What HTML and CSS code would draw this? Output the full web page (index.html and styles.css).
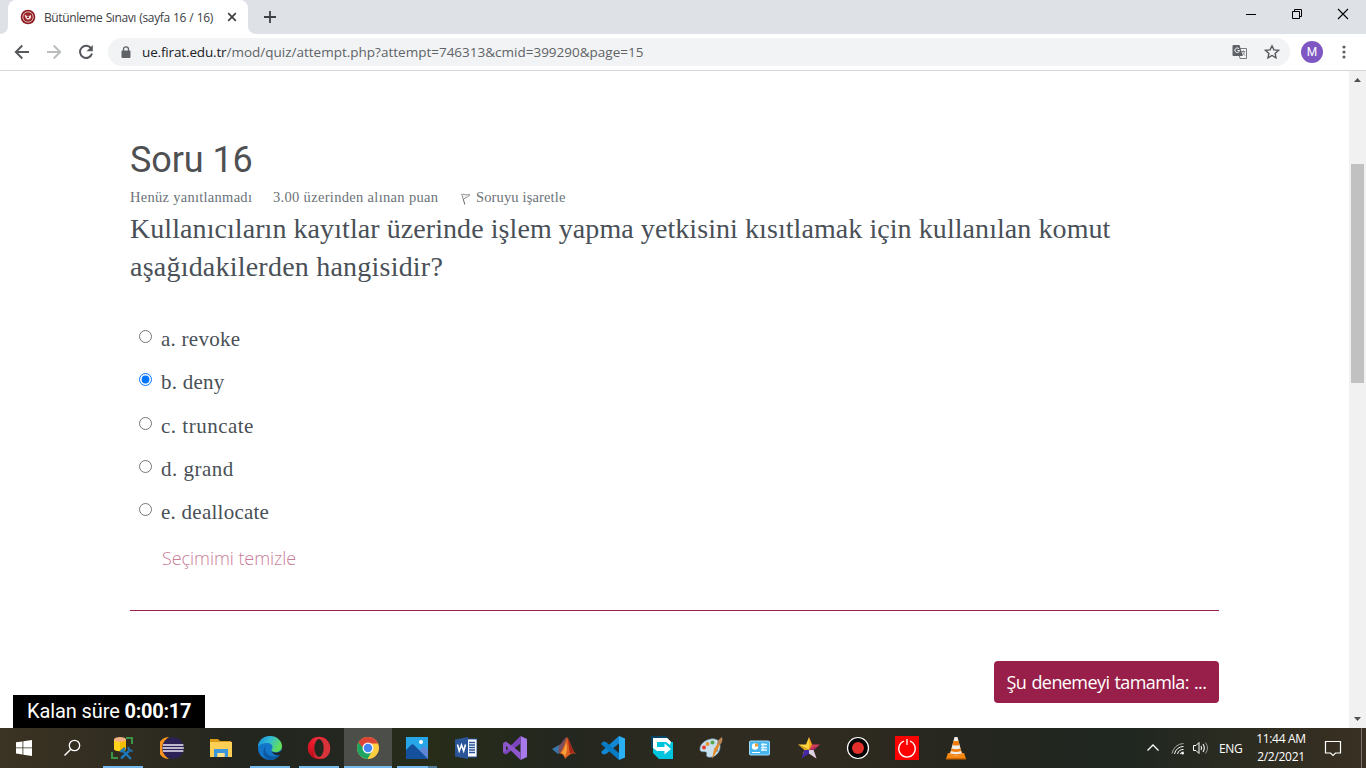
FILE: index.html
```html
<!DOCTYPE html>
<html lang="tr">
<head>
<meta charset="utf-8">
<title>Bütünleme Sınavı (sayfa 16 / 16)</title>
<link rel="stylesheet" href="styles.css">
</head>
<body>
<div class="desktop">
  <header class="tabstrip">
    <div class="tab">
      <svg class="favicon" width="16" height="16" viewBox="0 0 16 16"><circle cx="8" cy="8" r="7.3" fill="#8f1d22"/><circle cx="8" cy="8" r="5.2" fill="none" stroke="#e0bcbc" stroke-width="1"/><circle cx="8" cy="8" r="3.800" fill="#a02a2e"/><path d="M4.500 5.500l2.500 1.500h2l2-1v3L9 10.500H7L5.500 8.500z" fill="#f3e2e2"/><rect x="7" y="7.500" width="2" height="1.500" fill="#8f1d22"/></svg>
      <span class="tab-title">Bütünleme Sınavı (sayfa 16 / 16)</span>
      <svg class="tab-close" width="10" height="10" viewBox="0 0 10 10"><path d="M1.200 1.200l7.600 7.600M8.800 1.200L1.200 8.800" stroke="#3c4043" stroke-width="1.700"/></svg>
    </div>
    <svg class="new-tab" width="12" height="12" viewBox="0 0 12 12"><path d="M6 0v12M0 6h12" stroke="#3c4043" stroke-width="1.800"/></svg>
    <div class="window-controls">
      <svg width="46" height="28" viewBox="0 0 46 28"><path d="M18 14.500h10" stroke="#000"/></svg>
      <svg width="46" height="28" viewBox="0 0 46 28"><path d="M18.500 11.500h7v7h-7zM20.500 11.500v-2h7v7h-2" fill="none" stroke="#000"/></svg>
      <svg width="46" height="28" viewBox="0 0 46 28"><path d="M18 9l10 10M28 9L18 19" stroke="#000" stroke-width="1.100"/></svg>
    </div>
  </header>
  <nav class="toolbar">
    <svg class="nav-icon" width="16" height="16" viewBox="0 0 16 16"><path d="M15 8H2M8.300 1.500L1.800 8l6.500 6.500" fill="none" stroke="#55585c" stroke-width="1.900"/></svg>
    <svg class="nav-icon" width="16" height="16" viewBox="0 0 16 16"><path d="M1 8h13M7.700 1.500L14.200 8l-6.500 6.500" fill="none" stroke="#babcbe" stroke-width="1.900"/></svg>
    <svg class="nav-icon" width="16" height="16" viewBox="0 0 16 16"><path d="M13.300 4.600A6.100 6.100 0 1 0 14 9.500" fill="none" stroke="#55585c" stroke-width="2"/><path d="M14.800 1v6.200H8.600z" fill="#55585c"/></svg>
    <div class="omnibox">
      <svg width="10" height="13" viewBox="0 0 10 13"><path d="M2.500 5V3.300a2.500 2.500 0 0 1 5 0V5" fill="none" stroke="#5f6368" stroke-width="1.300"/><rect x="0.500" y="4.500" width="9" height="7.500" rx="1" fill="#5f6368"/></svg>
      <span class="url"><b>ue.firat.edu.tr</b>/mod/quiz/attempt.php?attempt=746313&amp;cmid=399290&amp;page=15</span>
      <svg class="translate" width="16" height="16" viewBox="0 0 16 16"><path d="M6 4.500h8.500v10H8z" fill="#f7f7f8" stroke="#777a7e" stroke-width="1"/><path d="M1.500 1h6l3.300 11H1.500A1 1 0 0 1 .5 11V2a1 1 0 0 1 1-1z" fill="#5f6368"/><path d="M7 4.800A2.300 2.300 0 1 0 7.500 6.500H5.500" fill="none" stroke="#fff" stroke-width="1"/><path d="M9.200 7.500h4M11.300 6.300v1.200M12.500 7.500c-.3 2-1.500 3-2.300 3.500M10.500 8.500l2.600 3.200" fill="none" stroke="#777a7e" stroke-width=".9"/></svg>
      <svg class="star" width="16" height="16" viewBox="0 0 16 16"><path d="M8 1.800l1.900 4.100 4.500.5-3.300 3 .9 4.400L8 11.500l-4 2.300.9-4.400-3.300-3 4.500-.5z" fill="none" stroke="#55585c" stroke-width="1.400"/></svg>
    </div>
    <div class="avatar">M</div>
    <svg class="more" width="4" height="14" viewBox="0 0 4 14"><g fill="#5f6368"><circle cx="2" cy="2" r="1.600"/><circle cx="2" cy="7" r="1.600"/><circle cx="2" cy="12" r="1.600"/></g></svg>
  </nav>
  <div class="viewport">
    <main class="page">
      <h1 class="question-title">Soru 16</h1>
      <div class="meta">
        <span class="state">Henüz yanıtlanmadı</span>
        <span class="grade">3.00 üzerinden alınan puan</span>
        <svg class="flag-icon" width="10" height="12" viewBox="0 0 10 12"><path d="M.8 1l3 10.500" stroke="#666" stroke-width="1"/><path d="M1 1.500c2-1 3 .8 5 .2l3 .1-3 2.500-3.500 1.700" fill="#eee" stroke="#888" stroke-width=".9"/></svg>
        <span class="flag">Soruyu işaretle</span>
      </div>
      <p class="question"><span class="line-one">Kullanıcıların kayıtlar üzerinde işlem yapma yetkisini kısıtlamak için kullanılan komut</span><br><span class="line-two">aşağıdakilerden hangisidir?</span></p>
      <div class="answers">
        <label class="answer"><input type="radio" name="answer"><span>a. revoke</span></label>
        <label class="answer"><input type="radio" name="answer" checked><span>b. deny</span></label>
        <label class="answer"><input type="radio" name="answer"><span class="wide">c. truncate</span></label>
        <label class="answer"><input type="radio" name="answer"><span class="wide">d. grand</span></label>
        <label class="answer"><input type="radio" name="answer"><span>e. deallocate</span></label>
      </div>
      <a class="clear">Seçimimi temizle</a>
      <div class="actions"><button class="finish">Şu denemeyi tamamla: ...</button></div>
    </main>
    <div class="scrollbar">
      <svg width="17" height="17" viewBox="0 0 17 17"><path d="M5 11l3.500-4L12 11z" fill="#505050"/></svg>
      <div class="thumb"></div>
      <svg class="down" width="17" height="17" viewBox="0 0 17 17"><path d="M5 6h7l-3.500 4z" fill="#505050"/></svg>
    </div>
    <div class="timer">Kalan süre <b>0:00:17</b></div>
  </div>
  <footer class="taskbar">
    <div class="cell"><svg width="16" height="16" viewBox="0 0 16 16"><path d="M0 2.300L6.500 1.400V7.500H0zM7.300 1.300L16 0v7.500H7.300zM0 8.300h6.500v6.200L0 13.600zM7.300 8.300H16V16l-8.700-1.300z" fill="#fff"/></svg></div>
    <div class="cell search"><svg width="18" height="18" viewBox="0 0 18 18"><circle cx="11.500" cy="6.500" r="5.200" fill="none" stroke="#fff" stroke-width="1.300"/><path d="M7.800 10.300L1.500 16.500" stroke="#fff" stroke-width="1.400"/></svg></div>
    <div class="cell open first"><svg width="24" height="24" viewBox="0 0 24 24"><path d="M16 2h6v6M2 16v6h6" fill="none" stroke="#3a9445" stroke-width="2"/><path d="M4 3v10c0 3 12 3 12 0V3z" fill="#ffd21c"/><path d="M10 3h6v10c0 1.500-3 2.200-6 2.200z" fill="#f5bd00"/><ellipse cx="10" cy="3.500" rx="6" ry="2.400" fill="#f2b183"/><g stroke="#1f77b8" stroke-width="2.400" fill="none"><path d="M12 14l9 9M10.500 16l4.500-4"/><path d="M11 22.500L19 15"/><path d="M22.500 14.500a3 3 0 0 1-4-3.500" stroke-width="2"/></g></svg></div>
    <div class="cell"><svg width="24" height="24" viewBox="0 0 24 24"><path d="M9 1A11 11 0 0 0 9 23 13 13 0 0 1 9 1z" fill="#f7941e"/><circle cx="13" cy="12" r="10.800" fill="#2c2255"/><path d="M3 9h20.400M2.500 12h21.300M3 15h20.400" stroke="#eeeaf8" stroke-width="1.300"/></svg></div>
    <div class="cell"><svg width="22" height="22" viewBox="0 0 22 22"><path d="M0 2h8l2 2h11v5H0z" fill="#d99a15"/><path d="M0 5h22v15H0z" fill="#ffcf55"/><path d="M4 12h14v8h-3.500v-4h-7v4H4z" fill="#3b97db"/><path d="M7.500 16h7v4h-7z" fill="#ffdf8c"/></svg></div>
    <div class="cell open"><svg width="24" height="24" viewBox="0 0 24 24"><defs><linearGradient id="edge-top" x1="0" y1="0" x2="1" y2=".4"><stop offset="0" stop-color="#1686d9"/><stop offset=".5" stop-color="#31bbd3"/><stop offset="1" stop-color="#63de59"/></linearGradient></defs><circle cx="12" cy="12" r="12" fill="#1376c8"/><path d="M0 11C0 4.500 5.500 0 12 0c7 0 12 5 12 10 0 4-3 6-6.500 6-3 0-4-1-4-2 0-.8 1-1.500 1-3 0-2-2-4-5.500-4C4 7 .5 9.500 0 11z" fill="url(#edge-top)"/><path d="M8.500 9C5 12 8 20 15 20.500c3 .2 5.500-.8 7-2-2 3.500-5.500 5.500-9.500 5.500C7 23.500 5 19 5.500 15c.3-3 1.500-5 3-6z" fill="#0c59a4"/><path d="M13.500 14c-.4 2 3 3 6 2.500 2-.3 3.500-1.500 4.500-3l.5 3.500-1.600 2c-3 1-8.900 0-9.400-5z" fill="#22282a"/></svg></div>
    <div class="cell open"><svg width="24" height="24" viewBox="0 0 24 24"><defs><linearGradient id="opera" x1="0" y1="0" x2="0" y2="1"><stop offset="0" stop-color="#ff1f32"/><stop offset="1" stop-color="#b50d18"/></linearGradient></defs><circle cx="12" cy="12" r="11.200" fill="url(#opera)"/><path d="M7.500 3c4-3.500 13-1 15 6 2 6-1 12-6 13.500-4 .5-8-.5-9-1.500z" fill="#d9333b"/><ellipse cx="12" cy="12" rx="4.700" ry="9" fill="#24271f"/></svg></div>
    <div class="cell open active"><svg width="24" height="24" viewBox="0 0 24 24"><circle cx="12" cy="12" r="11" fill="#ffcd40"/><path d="M2.500 6.500A11 11 0 0 1 22 7.500H12L7.500 14z" fill="#db4437"/><path d="M2.500 6.500A11 11 0 0 0 11.500 23l5-8.500-8-1z" fill="#1da462"/><circle cx="12" cy="12" r="5.500" fill="#f5f5f5"/><circle cx="12" cy="12" r="4.200" fill="#4285f4"/></svg></div>
    <div class="cell open stacked"><svg width="22" height="22" viewBox="0 0 22 22"><path d="M0 0h22v22H0z" fill="#27a7e8"/><path d="M12 14l6-5 4 4v9h-6z" fill="#5f86d4"/><path d="M0 13l5-5q1.500-1.500 3 0l14 14H0z" fill="#14509b"/><circle cx="15" cy="5" r="2" fill="#fff"/></svg></div>
    <div class="cell"><svg width="22" height="22" viewBox="0 0 22 22"><path d="M11 2h11v18H11z" fill="#fff" stroke="#2a5699"/><path d="M14 5.500h6M14 8h6M14 10.500h6M14 13h6M14 15.500h6" stroke="#2a5699" stroke-width="1.300"/><path d="M0 2.500L13 0v22L0 19.500z" fill="#2a5699"/><path d="M2.500 7.500l1.700 6.500 2.300-6L8.700 14l1.800-6.500" fill="none" stroke="#fff" stroke-width="1.600"/></svg></div>
    <div class="cell"><svg width="24" height="24" viewBox="0 0 24 24"><path d="M17.500 0L24 3v18l-6.500 3z" fill="#a879e8"/><path d="M17.500 0v7.500L3 18.500 0 17 13 4.500z" fill="#7d45bd"/><path d="M0 7l3-1.500 14.500 11V24L13 19.500z" fill="#8d57cc"/><path d="M0 7l3 2v6l-3 2z" fill="#8d57cc"/></svg></div>
    <div class="cell"><svg width="24" height="24" viewBox="0 0 24 24"><path d="M0 13l7-4 4 4-5 5z" fill="#3978ac"/><path d="M7 9c3-1 5-7 8-8l-4 13-3 3-2-1z" fill="#7a4f5e"/><path d="M15 1c3 3 5 14 9 17-4-2-7 1-11 5-1-4-3-6-6-5 4-3 6-12 8-17z" fill="#df5f22"/><path d="M15 1c3 3 5 14 9 17-3-2-5-1-6 0-1-5-1-12-3-17z" fill="#a3281a"/><path d="M14 6c2 5 1 10-1 15-1-3-2-4-4-4 3-3 4-7 5-11z" fill="#f4a038"/></svg></div>
    <div class="cell"><svg width="24" height="24" viewBox="0 0 24 24"><path d="M18 0l6 2.500v19L18 24z" fill="#2bb0f4"/><path d="M18 0L0 16l2 2.500L5 18 18 7.500z" fill="#1389d5"/><path d="M0 8l2-2.500L5 6l13 11v7z" fill="#087bc4"/></svg></div>
    <div class="cell"><svg width="24" height="24" viewBox="0 0 24 24"><path d="M1 0h15l3 3-5 11H4l-3-3z" fill="#064365"/><path d="M3 2h14l5 5v8H3z" fill="#fff"/><path d="M3 11v6l6 6h14V6h-2l-1 3-4-3H7v8z" fill="#00c4dd"/><path d="M3 2h14l4 4H7v9l-4-3z" fill="#fff"/><path d="M7 11h7.500V7.500l6.500 5.500-6.500 5.500V15H7z" fill="#fff"/></svg></div>
    <div class="cell"><svg width="24" height="24" viewBox="0 0 24 24"><path d="M12 3c6-1 10 3 9 9s-6 10-12 9c-3-1 0-4-2-5s-6 1-6-3C1 8 6 4 12 3z" fill="#c9e1ef" stroke="#789fb8" stroke-width=".7"/><circle cx="5" cy="11.500" r="2" fill="#e93a2e"/><circle cx="8.500" cy="8" r="2" fill="#e59632"/><circle cx="13.500" cy="6.500" r="2" fill="#5aa64a"/><circle cx="17" cy="14" r="2" fill="#3b8ad3"/><path d="M13 23l2-10 4-6 2 1-3 7z" fill="#e68b2c"/><path d="M18 8c0-3 2-5 5-7 1 3 0 7-3 8z" fill="#b98455"/></svg></div>
    <div class="cell"><svg width="22" height="22" viewBox="0 0 22 22"><rect x=".5" y="4" width="20" height="14" rx="1" fill="#48b6ee" stroke="#9adbfa"/><circle cx="6" cy="9.500" r="3.200" fill="#fff"/><path d="M6 9.500V6.300a3.200 3.200 0 0 1 3.200 3.200z" fill="#f29b25"/><path d="M12 7.500h6M12 10.500h6M12 13h6M14 6v8" stroke="#e4f7ff" stroke-width="1.300"/><path d="M3 15.500h8" stroke="#fff"/></svg></div>
    <div class="cell"><svg width="24" height="24" viewBox="0 0 24 24"><path d="M12 1l3 7.500h8L16.500 14l3 8.500L12 17.500z" fill="#d83f56"/><path d="M12 1L9 8.500H1L12 14z" fill="#ffd33b"/><path d="M12 1l3 7.500-3 5.500z" fill="#f1ae18"/><path d="M1 8.500L7.500 14l-2 4.500L12 14z" fill="#f1ae18"/><path d="M7.500 14l-3 8.500 7.500-5V14z" fill="#4328a7"/><path d="M12 14v3.500l7.500 5-3-8.500z" fill="#d7d4e3"/><path d="M12 14l11-5.500-6.500 5.500z" fill="#a22a64"/></svg></div>
    <div class="cell"><svg width="24" height="24" viewBox="0 0 24 24"><circle cx="12" cy="12" r="10.500" fill="#050505" stroke="#fff" stroke-width="1.200"/><circle cx="12" cy="12" r="6" fill="#e12f2b"/></svg></div>
    <div class="cell"><svg width="24" height="24" viewBox="0 0 24 24"><path d="M0 0h24v24H0z" fill="#f00"/><path d="M9 5a8.300 8.300 0 1 0 6 0M12 3v6" fill="none" stroke="#fff" stroke-width="1.300"/></svg></div>
    <div class="cell"><svg width="24" height="24" viewBox="0 0 24 24"><path d="M4 17h16l2 6H2z" fill="#f58a13"/><path d="M10.500 1h3L18 18q-6 3-12 0z" fill="#f1eee8"/><path d="M9.500 5h5l1 4q-3.500 1-7 0zM7.500 12.500q4.500 1.500 9 0L18 18q-6 3-12 0z" fill="#ee7d0c"/><path d="M7 15q5 2 10 0l.6 2.200q-5.600 2.300-11.200 0z" fill="#f1eee8"/><path d="M2 22h20v1.500H2z" fill="#cc6500"/></svg></div>
    <div class="tray">
      <svg width="14" height="14" viewBox="0 0 14 14"><path d="M1.500 9.500L7 4l5.500 5.500" fill="none" stroke="#fff" stroke-width="1.300"/></svg>
      <svg class="wifi" width="14" height="14" viewBox="0 0 14 14"><g fill="none" stroke="#fff" stroke-width="1"><path d="M1 12.500A12 12 0 0 1 12.500 2.500" stroke="#aaa"/><path d="M3.500 13A9 9 0 0 1 12.500 5.500M6.500 13A6 6 0 0 1 12.500 8.500M9.200 13A3.500 3.500 0 0 1 12.500 11"/></g><circle cx="11.700" cy="12.200" r="1.200" fill="#fff"/></svg>
      <svg class="volume" width="18" height="14" viewBox="0 0 18 14"><path d="M1.500 4.500H4L7 1.500v11L4 9.500H1.500z" fill="none" stroke="#fff"/><path d="M9 5q1.300 2 0 4M11 3q2.600 4 0 8" fill="none" stroke="#fff" stroke-width="1.100"/><path d="M13.500 1.500q4 5.500 0 11" fill="none" stroke="#999"/></svg>
      <span class="language">ENG</span>
      <div class="clock"><span>11:44 AM</span><span>2/2/2021</span></div>
      <svg class="notify" width="18" height="18" viewBox="0 0 18 18"><path d="M1.500 2.500h15v11.500h-5L9 16.500 6.500 14h-5z" fill="none" stroke="#fff" stroke-width="1.200"/></svg>
      <div class="show-desktop"></div>
    </div>
  </footer>
</div>
</body>
</html>
```
FILE: styles.css
```css
* { box-sizing: border-box; }
body { margin: 0; background: #fff; overflow: hidden; }
svg { display: block; flex: none; }
.desktop { width: 1366px; height: 768px; display: flex; flex-direction: column; font-family: "Open Sans", sans-serif; }

.tabstrip { height: 34px; background: #dee1e6; display: flex; align-items: flex-start; padding-left: 8px; }
.tab { position: relative; width: 240px; height: 34px; background: #fff; border-radius: 8px 8px 0 0; display: flex; align-items: center; padding: 0 11px 0 12px; }
.tab::before, .tab::after { content: ""; position: absolute; bottom: 0; width: 8px; height: 8px; }
.tab::before { left: -8px; background: radial-gradient(circle at 0 0, #dee1e6 7.5px, #fff 8.500px); }
.tab::after { right: -8px; background: radial-gradient(circle at 100% 0, #dee1e6 7.5px, #fff 8.500px); }
.tab-title { margin-left: 8px; font-size: 12px; letter-spacing: -0.38px; word-spacing: 0.6px; color: #3c4043; white-space: nowrap; }
.tab-close { margin-left: auto; }
.new-tab { margin: 11px 0 0 16px; }
.window-controls { margin-left: auto; display: flex; }

.toolbar { height: 37px; border-bottom: 1px solid #d5d7da; display: flex; align-items: center; padding: 0 20px 0 14px; }
.nav-icon { margin-right: 16px; }
.omnibox { width: 1182px; height: 28px; margin-left: -2px; border-radius: 14px; background: #f1f3f4; display: flex; align-items: center; padding: 0 10px 0 13px; }
.url { margin-left: 11px; font-size: 13.500px; letter-spacing: 0; color: #5f6368; white-space: nowrap; }
.url b { font-weight: 400; color: #202124; letter-spacing: -0.15px; }
.translate { margin-left: auto; }
.star { margin-left: 16px; }
.avatar { width: 22px; height: 22px; margin-left: 11px; border-radius: 50%; background: #7e57c2; color: #fff; font: 12px/22px Roboto, sans-serif; text-align: center; }
.more { margin-left: auto; }

.viewport { position: relative; height: 657px; display: flex; }
.page { flex: 1; padding: 68px 130px 0 130px; font-family: "Liberation Serif", serif; color: #495057; }
.question-title { margin: 0; font: 400 36px/43px Roboto, sans-serif; letter-spacing: -0.1px; color: #4f5052; }
.meta { display: flex; align-items: center; height: 20px; margin-top: 5px; font-size: 14.500px; line-height: 20px; letter-spacing: 0.28px; color: #6b7278; white-space: nowrap; }
.state { width: 143px; }
.grade { width: 188px; letter-spacing: 0.32px; }
.flag-icon { margin-top: 3px; }
.flag { margin-left: 5px; letter-spacing: 0.14px; }
.question { margin: 3px 0 0; font-size: 28px; line-height: 38px; letter-spacing: 0.07px; white-space: nowrap; }
.line-two { letter-spacing: 0.22px; }
.answers { margin-top: 32px; padding-left: 9px; }
.answer { display: flex; height: 43.300px; font-size: 21px; line-height: 42px; letter-spacing: 0.25px; }
.answer input { width: 13px; height: 13px; margin: 12px 9px 0 0; }
.wide { letter-spacing: 0.5px; }
.clear { display: block; margin: 6px 0 0 32px; font: 300 18px/36px "Open Sans", sans-serif; letter-spacing: -0.06px; color: #c87d98; }
.actions { margin-top: 34px; border-top: 1px solid #981f49; padding-top: 50px; width: 1089px; display: flex; justify-content: flex-end; }
.finish { width: 225px; height: 42px; border: 0; padding: 0; border-radius: 4px; background: #981f49; color: #fff; font: 18px/42px "Open Sans", sans-serif; letter-spacing: -0.58px; word-spacing: 1px; white-space: nowrap; }
.scrollbar { width: 17px; background: #f1f1f1; display: flex; flex-direction: column; }
.thumb { width: 13px; height: 219px; margin: 76px 0 0 2px; background: #c1c1c1; }
.down { margin-top: auto; }
.timer { position: absolute; left: 13px; bottom: 0; width: 192px; height: 33px; background: #000; color: #fff; padding-left: 14px; font: 20px/32px Roboto, sans-serif; letter-spacing: -0.1px; white-space: nowrap; }
.timer b { letter-spacing: -0.3px; }

.taskbar { height: 40px; display: flex; background: linear-gradient(90deg, #3b3323, #2e2b20 150px, #22261f 250px, #232720 340px, #272d19 430px, #23271f 560px, #302b20 720px, #302b20 830px, #24261f 980px, #1f2720 1120px, #393022 1366px); }
.cell { width: 48px; height: 40px; margin-right: 1px; display: flex; align-items: center; justify-content: center; position: relative; }
.cell:first-child { margin-right: 0; }
.cell.search { margin-right: 2px; }
.cell.first { margin-right: 2px; }
.open::after { content: ""; position: absolute; left: 4px; right: 4px; bottom: 0; height: 2px; background: #76b9ed; }
.first::after { left: 5px; right: 3px; }
.active { background: #4b4e49; }
.active::after { left: 0; right: 0; }
.stacked::after { background: linear-gradient(90deg, #76b9ed 31px, #527c9b 31px); }
.tray { height: 40px; margin-left: auto; display: flex; align-items: center; color: #fff; font-size: 12px; letter-spacing: -0.3px; }
.wifi { margin-left: 11px; }
.volume { margin-left: 7px; }
.language { margin-left: 9px; width: 24px; }
.clock { margin-left: 12px; width: 52px; display: flex; flex-direction: column; align-items: center; line-height: 18px; white-space: nowrap; }
.notify { margin-left: 17px; }
.show-desktop { width: 1px; height: 40px; margin: 0 4px 0 19px; background: #77736b; }
```
